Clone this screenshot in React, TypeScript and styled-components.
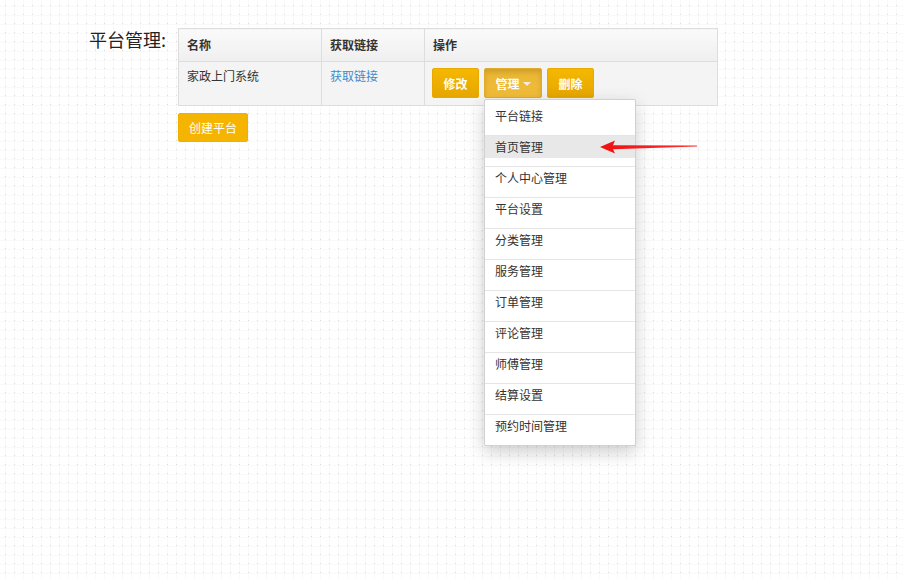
import React from "react";
import styled, { createGlobalStyle } from "styled-components";

const GlobalStyle = createGlobalStyle`
  html, body {
    margin: 0;
    padding: 0;
    height: 100%;
  }
  body {
    font-family: "Noto Sans CJK SC", "Noto Sans", sans-serif;
    color: #333;
    background-color: #fff;
    background-image:
      radial-gradient(circle, #dadada 0.6px, transparent 1px),
      linear-gradient(to right, #f9f9f9 1px, transparent 1px),
      linear-gradient(to bottom, #f9f9f9 1px, transparent 1px);
    background-size: 9px 9px;
    background-position: 1px 1px, 5px 0, 0 6px;
  }
`;

const Page = styled.div`
  display: flex;
  align-items: flex-start;
  padding: 28px 0 0 89px;
  min-height: 551px;
  box-sizing: border-box;
`;

const Label = styled.div`
  width: 89px;
  font-size: 18px;
  line-height: 22px;
  color: #222;
  white-space: nowrap;
`;

const Main = styled.div`
  display: flex;
  flex-direction: column;
  align-items: flex-start;
`;

const Table = styled.table`
  border-collapse: collapse;
  font-size: 12px;
  width: 540px;
  table-layout: fixed;
`;

const Th = styled.th<{ $w?: number }>`
  box-sizing: border-box;
  width: ${(p) => (p.$w ? `${p.$w}px` : "auto")};
  text-align: left;
  font-weight: bold;
  line-height: 16px;
  padding: 8px 8px;
  border: 1px solid #ddd;
  background: linear-gradient(#fafafa, #efefef);
  color: #333;
`;

const Td = styled.td<{ $pl?: number }>`
  vertical-align: top;
  line-height: 16px;
  padding: 6px 8px 7px ${(p) => p.$pl ?? 8}px;
  border: 1px solid #ddd;
  background: #f4f4f4;
  color: #333;
`;

const Link = styled.a`
  color: #428bca;
  text-decoration: none;
`;

const Actions = styled.div`
  display: flex;
  gap: 5px;
`;

const Button = styled.button<{ $active?: boolean }>`
  display: inline-flex;
  align-items: center;
  gap: 3px;
  height: 30px;
  padding: 0 10.5px;
  border: 1px solid ${(p) => (p.$active ? "#e2aa2a" : "#eaa900")};
  border-radius: 2px;
  font-family: inherit;
  font-size: 12px;
  font-weight: bold;
  color: #fff;
  cursor: pointer;
  background: ${(p) =>
    p.$active
      ? "linear-gradient(#e9b531, #f2bd3c)"
      : "linear-gradient(#f5b800, #e6a600)"};
  box-shadow: ${(p) =>
    p.$active ? "inset 0 3px 5px rgba(0,0,0,0.125)" : "none"};
`;

const CreateButton = styled(Button)`
  height: 29px;
  margin-top: 7px;
  padding: 0 10px;
  font-weight: normal;
  background: #f5b400;
  border-color: #f0b000;
`;

const Caret = styled.span`
  width: 0;
  height: 0;
  border-left: 4px solid transparent;
  border-right: 4px solid transparent;
  border-top: 4px solid #f6eedc;
  margin-top: 2px;
`;

const DropWrap = styled.div`
  position: relative;
`;

const Menu = styled.ul`
  position: absolute;
  left: 0;
  top: 31px;
  z-index: 10;
  width: 152px;
  margin: 0;
  padding: 5px 0 0;
  list-style: none;
  box-sizing: border-box;
  background: #fff;
  border: 1px solid rgba(0, 0, 0, 0.18);
  border-radius: 2px;
  box-shadow: 0 6px 18px rgba(0, 0, 0, 0.2);
  font-size: 12px;
  font-weight: normal;
`;

const Item = styled.li`
  padding-bottom: 8px;
  border-top: 1px solid #e5e5e5;
  &:first-child {
    border-top: none;
  }
  &:last-child {
    padding-bottom: 5px;
  }
`;

const ItemLink = styled.a<{ $hover?: boolean }>`
  display: block;
  padding: 0 10px;
  line-height: 22px;
  color: #333;
  text-decoration: none;
  background: ${(p) => (p.$hover ? "#e8e8e8" : "transparent")};
`;

const Arrow = styled.svg`
  position: absolute;
  left: 115px;
  top: 40px;
  overflow: visible;
`;

const menuItems = [
  "平台链接",
  "首页管理",
  "个人中心管理",
  "平台设置",
  "分类管理",
  "服务管理",
  "订单管理",
  "评论管理",
  "师傅管理",
  "结算设置",
  "预约时间管理",
];

export default function App() {
  return (
    <>
      <GlobalStyle />
      <Page>
        <Label>平台管理:</Label>
        <Main>
          <Table>
            <thead>
              <tr>
                <Th $w={143}>名称</Th>
                <Th $w={103}>获取链接</Th>
                <Th>操作</Th>
              </tr>
            </thead>
            <tbody>
              <tr>
                <Td>家政上门系统</Td>
                <Td>
                  <Link href="#">获取链接</Link>
                </Td>
                <Td $pl={7}>
                  <Actions>
                    <Button>修改</Button>
                    <DropWrap>
                      <Button $active>
                        管理<Caret />
                      </Button>
                      <Menu>
                        {menuItems.map((m, i) => (
                          <Item key={m}>
                            <ItemLink href="#" $hover={i === 1}>
                              {m}
                            </ItemLink>
                          </Item>
                        ))}
                        <Arrow width="98" height="14" viewBox="0 0 98 14">
                          <defs>
                            <linearGradient id="ag" x1="0" x2="1" y1="0" y2="0">
                              <stop offset="0" stopColor="#f01010" />
                              <stop offset="1" stopColor="#ff3030" />
                            </linearGradient>
                          </defs>
                          <path
                            d="M0 7 L15 0.5 L13 5.3 L97 5.6 L97 6.4 L13 9.2 L15 13.5 Z"
                            fill="url(#ag)"
                          />
                        </Arrow>
                      </Menu>
                    </DropWrap>
                    <Button>删除</Button>
                  </Actions>
                </Td>
              </tr>
            </tbody>
          </Table>
          <CreateButton>创建平台</CreateButton>
        </Main>
      </Page>
    </>
  );
}
